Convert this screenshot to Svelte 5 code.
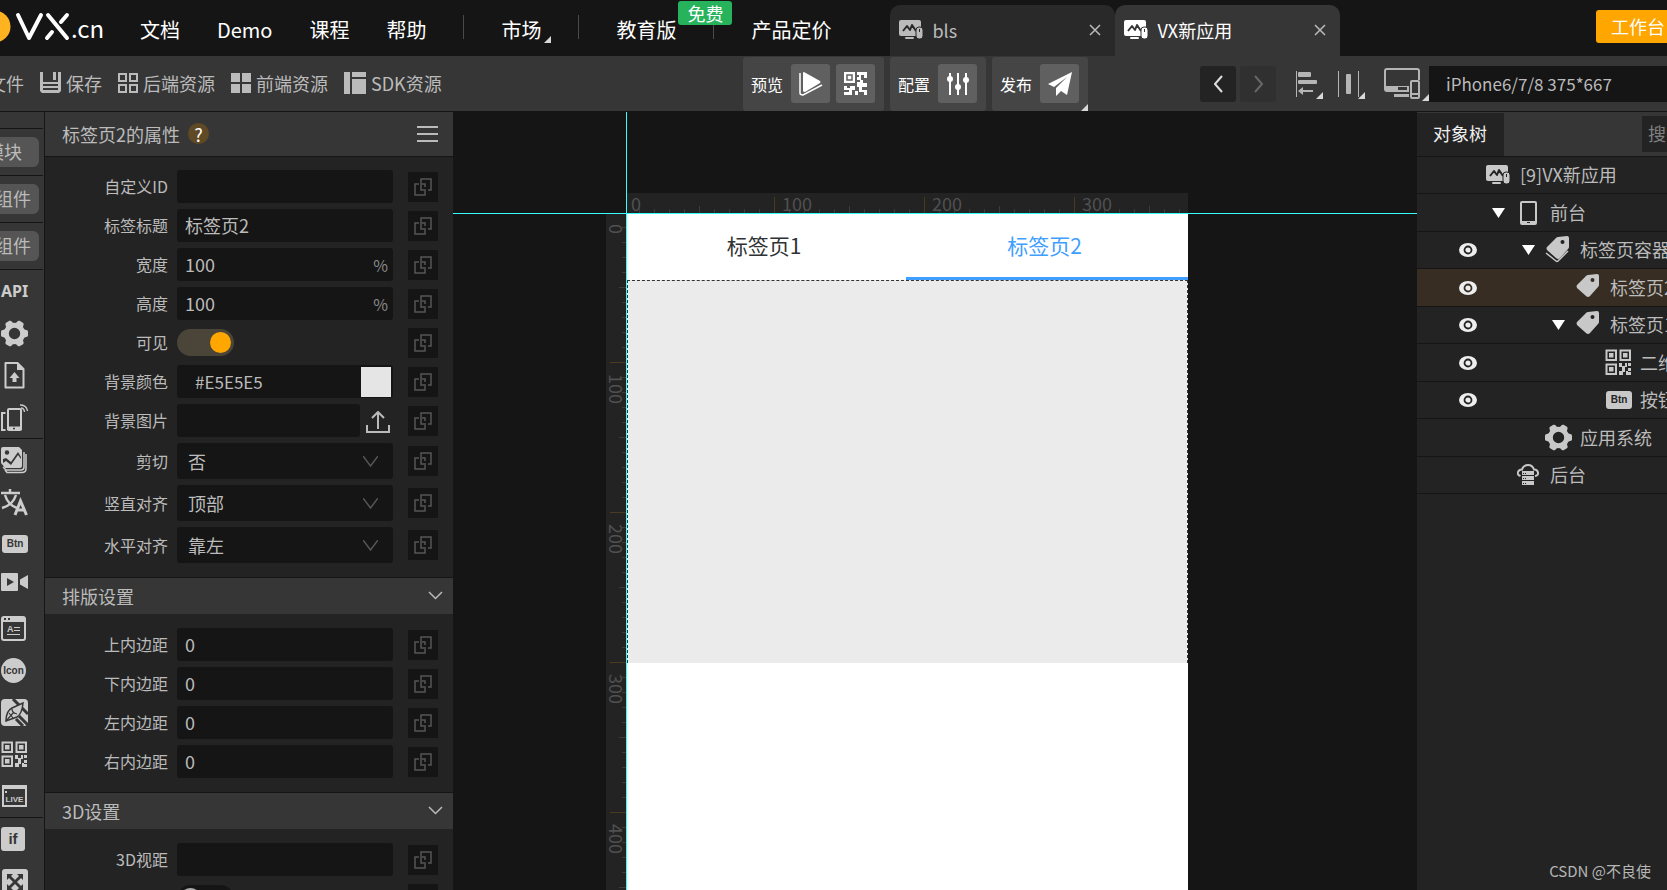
<script lang="ts">
  const fileTabs = [
    { title: "bls", active: false },
    { title: "VX新应用", active: true }
  ];

  const resources = [
    { icon: "save", label: "保存" },
    { icon: "gridOutline", label: "后端资源" },
    { icon: "gridSolid", label: "前端资源" },
    { icon: "sdk", label: "SDK资源" }
  ];

  const toolGroups = [
    ["api", "gear", "file", "phones"],
    ["pictures", "translate", "btn", "video", "article", "iconTool", "pen", "qr", "live"],
    ["if", "expand"]
  ];

  const sections = [
    {
      title: "",
      rows: [
        { id: "custom-id", label: "自定义ID", type: "text", value: "" },
        { id: "tab-title", label: "标签标题", type: "text", value: "标签页2" },
        { id: "width", label: "宽度", type: "text", value: "100", unit: "%" },
        { id: "height", label: "高度", type: "text", value: "100", unit: "%" },
        { id: "visible", label: "可见", type: "toggle", checked: true },
        { id: "bg-color", label: "背景颜色", type: "color", value: "#E5E5E5" },
        { id: "bg-image", label: "背景图片", type: "upload", value: "" },
        { id: "clip", label: "剪切", type: "select", value: "否" },
        { id: "v-align", label: "竖直对齐", type: "select", value: "顶部" },
        { id: "h-align", label: "水平对齐", type: "select", value: "靠左" }
      ]
    },
    {
      title: "排版设置",
      rows: [
        { id: "pad-top", label: "上内边距", type: "text", value: "0" },
        { id: "pad-bottom", label: "下内边距", type: "text", value: "0" },
        { id: "pad-left", label: "左内边距", type: "text", value: "0" },
        { id: "pad-right", label: "右内边距", type: "text", value: "0" }
      ]
    },
    {
      title: "3D设置",
      rows: [
        { id: "perspective", label: "3D视距", type: "text", value: "" },
        { id: "enable-3d", label: "", type: "toggle", checked: false }
      ]
    }
  ];

  const tree = [
    { label: "[9]VX新应用", icon: "app", level: 0 },
    { label: "前台", icon: "tablet", level: 1, open: true },
    { label: "标签页容器", icon: "tags", level: 2, open: true, eye: true },
    { label: "标签页2", icon: "tag", level: 3, eye: true, selected: true },
    { label: "标签页1", icon: "tag", level: 3, open: true, eye: true },
    { label: "二维码", icon: "qr", level: 4, eye: true },
    { label: "按钮", icon: "btn", level: 4, eye: true },
    { label: "应用系统", icon: "gear", level: 2 },
    { label: "后台", icon: "cloud", level: 1 }
  ];

  // one ruler tick every 10 units, 15px apart at 150% zoom
  const ticks = Array.from({ length: 48 }, (_, i) => i + 1);
  const tickSize = (n: number) => (n % 10 === 0 ? 16 : n % 5 === 0 ? 7 : 4);
  const tickColor = (n: number) => (n % 10 === 0 ? "#4a3a20" : "#3c3c3c");
  const hMarks = [0, 100, 200, 300];
  const vMarks = [0, 100, 200, 300, 400];

  let activePage = $state(2);
</script>

{#snippet icon(name)}
  {#if name === "save"}
    <svg width="21" height="21" viewBox="0 0 21 21" fill="currentColor">
      <path d="M0 0h3v10h15V0h3v19l-2 2H2l-2-2z" />
      <path d="M13 0h3v8h-3z" />
      <path d="M3 12h15v2H3zM3 16h15v2H3z" fill="var(--hole)" />
    </svg>
  {:else if name === "gridOutline"}
    <svg width="20" height="20" viewBox="0 0 20 20" fill="none" stroke="currentColor" stroke-width="2">
      <path d="M1 1h7v7H1zM12 1h7v7h-7zM1 12h7v7H1zM12 12h7v7h-7z" />
    </svg>
  {:else if name === "gridSolid"}
    <svg width="20" height="20" viewBox="0 0 20 20" fill="currentColor">
      <path d="M0 0h9v9H0zM11 0h9v9h-9zM0 11h9v9H0zM11 11h9v9h-9z" />
    </svg>
  {:else if name === "sdk"}
    <svg width="22" height="22" viewBox="0 0 22 22" fill="currentColor">
      <path d="M0 0h6v22H0zM8 0h14v5H8zM8 7h14v15H8z" />
    </svg>
  {:else if name === "app"}
    <svg width="24" height="20" viewBox="0 0 24 20" fill="currentColor">
      <rect width="22" height="16" rx="2" />
      <path d="M4 11l4-5 3 4 2-5 4 6" fill="none" stroke="var(--hole)" stroke-width="2" stroke-linejoin="round" />
      <rect x="17" y="7" width="7" height="12" rx="3" stroke="var(--hole)" stroke-width="1" />
      <path d="M20 9h1v3h-1z" fill="var(--hole)" />
      <rect x="6" y="17" width="9" height="2" rx="1" />
    </svg>
  {:else if name === "gear"}
    <svg width="27" height="27" viewBox="0 0 27 27" fill="currentColor">
      <circle cx="13.500" cy="13.500" r="8.200" fill="none" stroke="currentColor" stroke-width="5" />
      {#each [0, 60, 120, 180, 240, 300] as angle}
        <path d="M22 9l4 1.200q1 .4 1 1.400v3.800q0 1-1 1.400L22 18z" transform="rotate({angle} 13.500 13.500)" />
      {/each}
    </svg>
  {:else if name === "file"}
    <svg width="27" height="27" viewBox="0 0 27 27" fill="none" stroke="currentColor" stroke-width="2">
      <path d="M4.500 1h12l6 6v18.500h-18z" stroke-linejoin="round" />
      <path d="M16 1v7h7z" fill="currentColor" stroke="none" />
      <path d="M13.500 10l5 6h-3v4h-4v-4h-3z" fill="currentColor" stroke="none" />
    </svg>
  {:else if name === "phones"}
    <svg width="27" height="27" viewBox="0 0 27 27" fill="none" stroke="currentColor" stroke-width="2">
      <rect x="7" y="5" width="13" height="21" rx="1" />
      <path d="M6 22.500h15V26H6z" fill="currentColor" stroke="none" />
      <circle cx="13" cy="24.500" r="1" fill="var(--hole)" stroke="none" />
      <path d="M4.500 9H1v17h3.500" />
      <path d="M20 4q3 0 3.500 4M19 1q6.500 0 7.500 6" stroke-width="1.300" />
    </svg>
  {:else if name === "pictures"}
    <svg width="27" height="27" viewBox="0 0 27 27" fill="currentColor">
      <path d="M2 0h16l3 3v16q0 2-2 2H4l-4-5V2q0-2 2-2z" />
      <circle cx="6" cy="5.500" r="2.200" fill="var(--hole)" />
      <path d="M2 12l3-1 5 4 7-10 3 5v2l-3-4-7 10-5-4-3 2z" fill="var(--hole)" />
      <path d="M2 20l3 3h15q3 0 3-3V5M4 23l2 2.500h15q4 0 4-4V7" fill="none" stroke="currentColor" stroke-width="1.500" />
    </svg>
  {:else if name === "translate"}
    <svg width="27" height="27" viewBox="0 0 27 27" fill="none" stroke="currentColor" stroke-width="2.500">
      <path d="M0 4h19M9 0v4M4 6q3 10 12 13M15 6Q12 16 1 19" />
      <path d="M14 26l5.500-14L25.500 26M16 21h8" stroke-width="3" />
    </svg>
  {:else if name === "btn"}
    <svg width="27" height="20" viewBox="0 0 27 20">
      <rect x="1" y="1" width="26" height="18" rx="3" fill="currentColor" />
      <text x="14" y="13" text-anchor="middle" class="glyph" font-size="10">Btn</text>
    </svg>
  {:else if name === "video"}
    <svg width="27" height="27" viewBox="0 0 27 27" fill="currentColor">
      <rect width="17" height="18" rx="1" />
      <path d="M19 6.500L27 2v14l-8-4.500z" />
      <path d="M6 5l7 4-7 4z" fill="var(--hole)" />
    </svg>
  {:else if name === "article"}
    <svg width="27" height="27" viewBox="0 0 27 27" fill="currentColor">
      <rect x="1" y="2" width="23" height="23" rx="2" fill="none" stroke="currentColor" stroke-width="2" />
      <path d="M1 2h23v5H1z" />
      <path d="M3 3h2v2H3zM7 3h2v2H7z" fill="var(--hole)" />
      <text x="6" y="17" font-size="9" class="glyph light">A</text>
      <path d="M13 12h6v1h-6zM13 15h6v1h-6zM6 19h13v1H6z" />
    </svg>
  {:else if name === "iconTool"}
    <svg width="27" height="27" viewBox="0 0 27 27">
      <circle cx="12.500" cy="13.500" r="12.500" fill="currentColor" />
      <text x="12.500" y="17" text-anchor="middle" font-size="10" class="glyph">Icon</text>
    </svg>
  {:else if name === "pen"}
    <svg width="27" height="27" viewBox="0 0 27 27">
      <rect width="27" height="27" rx="4" fill="currentColor" />
      <path d="M12 0l15 15M18 17l9 9M15 20l7 7" stroke="var(--hole)" stroke-width="3" />
      <path d="M5 22q0-10 6-13l11-5q-1 11-6 14z" fill="currentColor" stroke="var(--hole)" stroke-width="1.500" />
      <path d="M5 22l8-9M11 10q0 4 5 5M8 14l4 5" fill="none" stroke="var(--hole)" stroke-width="1.200" />
    </svg>
  {:else if name === "qr"}
    <svg width="27" height="27" viewBox="0 0 27 27" fill="currentColor">
      <path d="M1.500 1.500h9.500v9.500H1.500zM15.500 1.500h9.500v9.500h-9.500zM1.500 15.500h9.500v9.500H1.500z" fill="none" stroke="currentColor" stroke-width="2" />
      <path d="M4 4h4.500v4.500H4zM18 4h4.500v4.500H18zM4 18h4.500v4.500H4z" />
      <path d="M14 14h3v3h3v-3h2v4h-2v2h-3v-2h-3zM23 14h3v3h-3zM23 19h3v3h-3v1h3v3h-5v-4h2zM14 22h3v-2h3v3h-2v3h-4z" />
    </svg>
  {:else if name === "live"}
    <svg width="27" height="27" viewBox="0 0 27 27">
      <rect x="2" y="3" width="23" height="20" fill="none" stroke="currentColor" stroke-width="2" />
      <path d="M1 2h25v4H1z" fill="currentColor" />
      <path d="M4 8h2v2H4z" fill="currentColor" />
      <text x="13.500" y="19" text-anchor="middle" font-size="8" class="glyph light">LIVE</text>
    </svg>
  {:else if name === "if"}
    <svg width="27" height="27" viewBox="0 0 27 27">
      <rect y="1" width="24" height="24" rx="3" fill="currentColor" />
      <text x="12" y="18" text-anchor="middle" font-size="15" class="glyph">if</text>
    </svg>
  {:else if name === "expand"}
    <svg width="27" height="27" viewBox="0 0 27 27">
      <rect x="1" y="1" width="26" height="26" rx="3" fill="currentColor" />
      <path d="M6 6h6l-2 2 4 4 4-4-2-2h6v6l-2-2-4 4 4 4 2-2v6h-6l2-2-4-4-4 4 2 2H6v-6l2 2 4-4-4-4-2 2z" fill="var(--hole)" />
    </svg>
  {:else if name === "tablet"}
    <svg width="17" height="24" viewBox="0 0 17 24">
      <rect x="1" y="1" width="15" height="22" rx="1" fill="none" stroke="currentColor" stroke-width="2" />
      <path d="M1 20h15v3H1z" fill="currentColor" />
      <path d="M7 21h3v1H7z" fill="var(--hole)" />
    </svg>
  {:else if name === "tag" || name === "tags"}
    <svg width="26" height="28" viewBox="0 0 26 28" fill="currentColor">
      <path d="M13 1l9-1q2 0 2 2v9q0 1-1 2l-8 9q-2 2-4 0l-9-8q-1-2 0-3l9-9q1-1 2-1z" />
      <circle cx="17.500" cy="6" r="2" fill="var(--hole)" />
      {#if name === "tags"}
        <path d="M1 17l10 8q1 1 2 0l10-10" fill="none" stroke="currentColor" stroke-width="1.500" />
      {/if}
    </svg>
  {:else if name === "cloud"}
    <svg width="22" height="22" viewBox="0 0 22 22" fill="currentColor">
      <path d="M3.500 12Q0 11 1 8q1-2.500 4-2.500Q6.500 1 11 1t6 4.500q3.500 0 4 3 .5 3-3 3.500" fill="none" stroke="currentColor" stroke-width="2" />
      <path d="M5 7h12v4H5zM5 12h12v4H5zM5 17h12v4H5z" />
      <path d="M6 9h1v1H6zM8 9h1v1H8zM6 14h1v1H6zM8 14h1v1H8zM6 19h1v1H6zM8 19h1v1H8z" fill="var(--hole)" />
    </svg>
  {/if}
{/snippet}

{#snippet corner()}
  <svg class="corner" width="7" height="7" viewBox="0 0 7 7"><path d="M7 0v7H0z" fill="#d8d8d8" /></svg>
{/snippet}

<div class="app">
  <header>
    <a class="logo" href="#home" aria-label="VX.cn">
      <svg width="71" height="56" viewBox="0 0 71 56">
        <circle cx="-5.500" cy="26.500" r="16" fill="#ffb320" />
        <path d="M18 15l11 23 12-23M48 15l19 23M67 15l-6 7M52 32l-5 6" fill="none" stroke="#fff" stroke-width="4" stroke-linecap="round" stroke-linejoin="round" />
      </svg>
      <span>.cn</span>
    </a>
    <nav>
      <a href="#docs">文档</a>
      <a href="#demo">Demo</a>
      <a href="#course">课程</a>
      <a href="#help">帮助</a>
      <i class="sep"></i>
      <a class="market" href="#market">市场{@render corner()}</a>
      <i class="sep"></i>
      <a class="edu" href="#edu">教育版<b>免费</b></a>
      <i class="sep"></i>
      <a href="#price">产品定价</a>
    </nav>
    <div class="file-tabs">
      {#each fileTabs as tab}
        <div class="file-tab" class:active={tab.active}>
          {@render icon("app")}
          <span>{tab.title}</span>
          <button aria-label="关闭">
            <svg width="12" height="12" viewBox="0 0 12 12"><path d="M1 1l10 10M11 1L1 11" stroke="#bbb" stroke-width="1.500" /></svg>
          </button>
        </div>
      {/each}
    </div>
    <button class="workbench">工作台</button>
  </header>

  <div class="toolbar">
    <div class="resources">
      <button>文件</button>
      {#each resources as item}
        <button>{@render icon(item.icon)}{item.label}</button>
      {/each}
    </div>
    <div class="actions">
      <div class="action">
        <span>预览</span>
        <button aria-label="预览">
          <svg width="24" height="24" viewBox="0 0 24 24" fill="#fff">
            <path d="M4 1q0-1 1-1l16 9q1 1 0 2L6 20q-2 0-2-1z" />
            <path d="M1 1v20q0 2 3 2l19-10" fill="none" stroke="#fff" stroke-width="1.500" />
          </svg>
        </button>
        <button aria-label="二维码">
          <svg width="23" height="23" viewBox="0 0 23 23" fill="#fff">
            <path d="M0 0h11v11H0z" />
            <path d="M3 3h5v5H3z" fill="none" stroke="#606060" stroke-width="1.500" />
            <path d="M13 0h10v6h-3V3h-3v5h-4V5h2V3h-2zM13 10h3V8h3v3h4v4h-5v3h5v5h-3v-3h-5v-5h-2zM0 14h3v2h3v-2h5v4H8v5H0v-3h5v-2H0zM11 19h3v4h-3z" />
          </svg>
        </button>
      </div>
      <div class="action">
        <span>配置</span>
        <button aria-label="配置">
          <svg width="22" height="22" viewBox="0 0 22 22" fill="#fff">
            <path d="M2 0h2v22H2zM10 0h2v22h-2zM18 0h2v22h-2z" />
            <circle cx="3" cy="6" r="3" /><circle cx="11" cy="14" r="3" /><circle cx="19" cy="7" r="3" />
          </svg>
        </button>
      </div>
      <div class="action">
        <span>发布</span>
        <button aria-label="发布">
          <svg width="24" height="24" viewBox="0 0 24 24" fill="#fff">
            <path d="M24 0L0 12l6 3L19 5 8 16v8l5-5 6 4z" />
          </svg>
        </button>
        {@render corner()}
      </div>
    </div>
    <div class="history">
      <button aria-label="后退">
        <svg width="9" height="18" viewBox="0 0 9 18"><path d="M8 1L1 9l7 8" fill="none" stroke="#ddd" stroke-width="2" /></svg>
      </button>
      <button class="off" aria-label="前进">
        <svg width="9" height="18" viewBox="0 0 9 18"><path d="M1 1l7 8-7 8" fill="none" stroke="#666" stroke-width="2" /></svg>
      </button>
    </div>
    <button class="tool" aria-label="对齐">
      <svg width="22" height="26" viewBox="0 0 22 26" fill="#b5b5b5">
        <path d="M0 0h1v26H0z" />
        <rect x="2" y="1" width="13" height="5" rx="1" /><rect x="2" y="9" width="19" height="4" rx="1" />
        <path d="M2 20l5-4v3h10v2H7v3z" />
      </svg>
      {@render corner()}
    </button>
    <button class="tool" aria-label="分布">
      <svg width="22" height="26" viewBox="0 0 22 26" fill="#b5b5b5">
        <path d="M0 0h1v26H0zM20 0h1v26h-1z" /><rect x="8" y="3" width="5" height="20" rx="1" />
      </svg>
      {@render corner()}
    </button>
    <button class="tool device" aria-label="设备">
      <svg width="36" height="31" viewBox="0 0 36 31" fill="none" stroke="#b5b5b5" stroke-width="2">
        <path d="M25 23H3q-2 0-2-2V3q0-2 2-2h30q2 0 2 2v9" />
        <path d="M1 18h24v5H3q-2 0-2-2zM10 26h15v3H10z" fill="#b5b5b5" stroke="none" />
        <path d="M15 20h7v1h-7z" stroke="#363636" />
        <rect x="27" y="13" width="8" height="17" rx="1" />
        <path d="M27 26h8" />
      </svg>
      {@render corner()}
    </button>
    <select class="device-select" aria-label="设备尺寸"><option>iPhone6/7/8 375*667</option></select>
  </div>

  <main>
    <aside class="tools">
      <div class="tools-top"></div>
      <div class="pill-row"><button class="module">模块</button></div>
      <div class="pill-row"><button>组件</button></div>
      <div class="pill-row"><button>组件</button></div>
      {#each toolGroups as group}
        <div class="tool-group">
          {#each group as name}
            <button aria-label={name}>
              {#if name === "api"}<b>API</b>{:else}{@render icon(name)}{/if}
            </button>
          {/each}
        </div>
      {/each}
    </aside>

    <section class="props">
      <div class="props-head">
        <span>标签页2的属性</span>
        <button class="help" aria-label="帮助">?</button>
        <button class="menu" aria-label="菜单">
          <svg width="21" height="16" viewBox="0 0 21 16"><path d="M0 1h21M0 8h21M0 15h21" stroke="#bbb" stroke-width="2" /></svg>
        </button>
      </div>
      {#each sections as section}
        {#if section.title}
          <button class="section-head">
            {section.title}
            <svg width="15" height="9" viewBox="0 0 15 9"><path d="M1 1l6.500 6.500L14 1" fill="none" stroke="#bbb" stroke-width="1.500" /></svg>
          </button>
        {/if}
        <div class="rows">
          {#each section.rows as row}
            <div class="row">
              <label for={row.id}>{row.label}</label>
              {#if row.type === "toggle"}
                <div class="slot"><input type="checkbox" class="toggle" id={row.id} checked={row.checked} /></div>
              {:else if row.type === "select"}
                <div class="slot field">
                  <select id={row.id}><option>{row.value}</option></select>
                  <svg class="chevron" width="15" height="11" viewBox="0 0 15 11"><path d="M0 0l7.500 10L15 0" fill="none" stroke="#555" stroke-width="1.500" /></svg>
                </div>
              {:else if row.type === "upload"}
                <div class="slot upload">
                  <input type="text" id={row.id} value={row.value} />
                  <button aria-label="上传">
                    <svg width="24" height="22" viewBox="0 0 24 22"><path d="M1 14v7h22v-7M12 18V1M6 7l6-6 6 6" fill="none" stroke="#bbb" stroke-width="2" /></svg>
                  </button>
                </div>
              {:else}
                <div class="slot field" class:color={row.type === "color"}>
                  <input type="text" id={row.id} value={row.value} />
                  {#if row.unit}<span class="unit">{row.unit}</span>{/if}
                  {#if row.type === "color"}
                    <button class="swatch" aria-label="选择颜色" style:background={row.value}></button>
                  {/if}
                </div>
              {/if}
              <button class="link" aria-label="绑定">
                <svg width="18" height="18" viewBox="0 0 18 18" fill="none" stroke="#555" stroke-width="1.500">
                  <path d="M11 11v6H1V6h4M8 6h3v3M7 7V1h10v11h-3M7 7v5h3" />
                </svg>
              </button>
            </div>
          {/each}
        </div>
      {/each}
    </section>

    <section class="canvas">
      <i class="guide-x"></i>
      <i class="guide-y"></i>
      <svg class="ruler-h" width="561" height="20" viewBox="0 0 561 20">
        {#each ticks as n}
          <rect x={15 * n - 3} y={20 - tickSize(n)} width="1" height={tickSize(n)} fill={tickColor(n)} />
        {/each}
        {#each hMarks as mark}
          <text x={mark * 3 / 2 + (mark ? 5 : 4)} y="18">{mark}</text>
        {/each}
      </svg>
      <svg class="ruler-v" width="20" height="720" viewBox="0 0 20 720">
        {#each ticks as n}
          <rect x={20 - tickSize(n)} y={15 * n - 2} width={tickSize(n)} height="1" fill={tickColor(n)} />
        {/each}
        {#each vMarks as mark}
          <text transform="translate(3 {mark * 3 / 2 + 10}) rotate(90)">{mark}</text>
        {/each}
      </svg>
      <div class="page">
        <div class="page-tabs">
          {#each [1, 2] as n}
            <button class:active={activePage === n} onclick={() => (activePage = n)}>标签页{n}</button>
          {/each}
        </div>
        <div class="page-body"></div>
      </div>
    </section>

    <aside class="tree">
      <div class="tree-head">
        <span>对象树</span>
        <input type="text" placeholder="搜索" aria-label="搜索" />
      </div>
      {#each tree as node}
        <div class="node" class:selected={node.selected}>
          <div class="indent" style:width="{36 + node.level * 30}px">
            {#if node.eye}
              <svg width="18" height="14" viewBox="0 0 18 14">
                <ellipse cx="9" cy="7" rx="9" ry="7" fill="#eee" />
                <circle cx="9" cy="7" r="3.500" fill="#eee" stroke="var(--hole)" stroke-width="1.800" />
              </svg>
            {/if}
          </div>
          <!-- the root has no caret column of its own -->
          {#if node.level > 0}
            <div class="cell">
              {#if node.open}
                <svg width="13" height="10" viewBox="0 0 13 10"><path d="M0 0h13L6.500 10z" fill="#fff" /></svg>
              {/if}
            </div>
          {/if}
          <div class="cell" class:root={node.level === 0}>{@render icon(node.icon)}</div>
          <span>{node.label}</span>
        </div>
      {/each}
      <div class="credit">CSDN @不良使</div>
    </aside>
  </main>
</div>

<style>
  :global(body) {
    background: #151515;
  }

  .app {
    --hole: #363636;
    height: 100vh;
    display: flex;
    flex-direction: column;
    overflow: hidden;
    background: #151515;
    color: #bbb;
    font-family: "Noto Sans CJK SC", "Noto Sans", sans-serif;
    font-size: 18px;
    line-height: 24px;
  }

  button,
  input,
  select {
    box-sizing: border-box;
    margin: 0;
    padding: 0;
    border: 0;
    background: none;
    color: inherit;
    font: inherit;
    outline: none;
    appearance: none;
  }

  button {
    flex: none;
    white-space: nowrap;
    cursor: pointer;
  }

  svg {
    display: block;
    flex: none;
  }

  a {
    color: #fff;
    text-decoration: none;
  }

  .glyph {
    font-family: "Liberation Sans", sans-serif;
    font-weight: 700;
    fill: var(--hole);
  }

  .glyph.light {
    fill: currentColor;
  }

  .corner {
    position: absolute;
    right: 0;
    bottom: 0;
  }

  /* top bar */
  header {
    flex: none;
    display: flex;
    height: 56px;
    white-space: nowrap;
  }

  .logo {
    flex: none;
    display: flex;
    width: 140px;
    font-size: 24px;
    line-height: 56px;
  }

  nav {
    display: flex;
    align-items: center;
    gap: 37px;
    padding-top: 3px;
    font-size: 20px;
  }

  .sep {
    width: 1px;
    height: 24px;
    margin-bottom: 6px;
    background: #4a4a4a;
  }

  .market,
  .edu {
    position: relative;
  }

  .market .corner {
    right: -10px;
    bottom: -1px;
  }

  .edu b {
    position: absolute;
    left: 62px;
    bottom: 17px;
    z-index: 1;
    padding: 0 9px;
    border-radius: 3px;
    background: #27b35c;
    font-size: 18px;
    font-weight: 400;
  }

  .file-tabs {
    display: flex;
    align-items: flex-end;
    margin-left: 59px;
  }

  .file-tab {
    --hole: #292929;
    box-sizing: border-box;
    display: flex;
    align-items: center;
    gap: 9px;
    width: 225px;
    height: 51px;
    padding: 0 14px 2px 9px;
    border-radius: 10px 10px 0 0;
    background: #292929;
  }

  .file-tab.active {
    --hole: #363636;
    background: #363636;
    color: #fff;
  }

  .file-tab span {
    flex: 1;
  }

  .workbench {
    height: 33px;
    margin: 10px -13px 0 auto;
    padding: 0 15px 2px;
    border-radius: 3px;
    background: #ffa600;
    color: #fff;
  }

  /* toolbar */
  .toolbar {
    flex: none;
    display: flex;
    align-items: center;
    height: 55px;
    border-bottom: 1px solid #151515;
    background: #363636;
  }

  .resources {
    box-sizing: border-box;
    flex: none;
    display: flex;
    gap: 16px;
    width: 755px;
    margin-left: -12px;
    padding-bottom: 2px;
  }

  .resources button {
    display: flex;
    align-items: center;
    gap: 5px;
  }

  .actions {
    flex: none;
    display: flex;
    gap: 6px;
  }

  .action {
    position: relative;
    display: flex;
    align-items: center;
    gap: 6px;
    height: 54px;
    padding: 0 9px 0 8px;
    border-radius: 3px;
    background: #454545;
    color: #fff;
    font-size: 16px;
  }

  .action span {
    margin-right: 2px;
  }

  .action button {
    display: grid;
    place-items: center;
    width: 39px;
    height: 39px;
    border-radius: 3px;
    background: #606060;
  }

  .history {
    flex: none;
    display: flex;
    gap: 4px;
    margin-left: 112px;
  }

  .history button {
    display: grid;
    place-items: center;
    width: 36px;
    height: 36px;
    border-radius: 3px;
    background: #232323;
  }

  .history .off {
    background: #303030;
  }

  .tool {
    position: relative;
    width: 27px;
    height: 31px;
    margin-left: 20px;
  }

  .tool + .tool {
    margin-left: 15px;
  }

  .tool.device {
    width: 45px;
    height: 35px;
    margin-left: 19px;
  }

  .device-select {
    flex: 1;
    min-width: 0;
    height: 36px;
    padding-left: 17px;
    background: #151515;
    font-size: 17px;
  }

  main {
    flex: 1;
    display: flex;
    min-height: 0;
  }

  /* component strip */
  .tools {
    flex: none;
    box-sizing: border-box;
    width: 45px;
    overflow: hidden;
    border-right: 1px solid #151515;
    background: #363636;
    color: #ccc;
  }

  .tools-top,
  .pill-row,
  .tool-group {
    margin-right: 1px;
    border-bottom: 1px solid #151515;
  }

  .tools-top {
    height: 16px;
  }

  .pill-row {
    padding: 8px 4px 8px 0;
    height: 30px;
  }

  .pill-row button {
    width: 100%;
    height: 30px;
    padding: 0 8px 2px 0;
    border-radius: 0 6px 6px 0;
    background: #555;
    display: flex;
    align-items: center;
    justify-content: flex-end;
    color: #bbb;
  }

  .pill-row .module {
    padding-right: 17px;
  }

  .tool-group button {
    display: flex;
    align-items: center;
    width: 100%;
    height: 42px;
    padding-left: 1px;
  }

  .tool-group b {
    font-family: "Noto Sans", sans-serif;
    font-size: 16px;
  }

  /* property panel */
  .props {
    flex: none;
    width: 408px;
    overflow: hidden;
    background: #232323;
  }

  .props-head {
    box-sizing: border-box;
    display: flex;
    align-items: center;
    height: 45px;
    padding: 0 15px 1px 17px;
    border-bottom: 1px solid #151515;
    background: #363636;
  }

  .help {
    width: 21px;
    height: 21px;
    margin-left: 8px;
    border-radius: 50%;
    background: #5f4a25;
    color: #fff;
    line-height: 20px;
  }

  .menu {
    margin-left: auto;
  }

  .section-head {
    display: flex;
    align-items: center;
    justify-content: space-between;
    width: 100%;
    height: 37px;
    padding: 0 10px 1px 17px;
    border-top: 1px solid #151515;
    background: #363636;
  }

  .rows {
    display: grid;
    grid-template-columns: minmax(0, 1fr);
    gap: 6px;
    padding: 13px 15px 14px 0;
  }

  .section-head + .rows {
    padding-top: 14px;
  }

  .row {
    display: flex;
    align-items: center;
  }

  .row label {
    width: 123px;
    margin-right: 9px;
    padding-bottom: 1px;
    text-align: right;
    font-size: 16px;
  }

  .slot {
    flex: 1;
    display: flex;
    align-items: center;
    min-width: 0;
    height: 33px;
    margin-right: 15px;
    border-radius: 3px;
  }

  .field,
  .upload input {
    background: #151515;
  }

  .slot input[type="text"] {
    flex: 1;
    min-width: 0;
    height: 33px;
    padding: 0 8px 1px;
    border-radius: 3px;
  }

  .slot.color input[type="text"] {
    padding-left: 18px;
    font-size: 17px;
  }

  .unit {
    margin-right: 5px;
    color: #888;
    font-size: 16px;
  }

  .swatch {
    width: 30px;
    height: 30px;
    margin-right: 2px;
  }

  .upload button {
    margin: 2px 3px 0 6px;
  }

  .slot select {
    flex: 1;
    height: 36px;
    padding-left: 11px;
  }

  .slot:has(select) {
    height: 36px;
  }

  .chevron {
    margin-right: 15px;
  }

  .toggle {
    width: 57px;
    height: 27px;
    padding: 3px;
    border-radius: 14px;
    background: #151515;
  }

  .toggle::before {
    content: "";
    display: block;
    width: 21px;
    height: 21px;
    border-radius: 50%;
    background: #aaa;
  }

  .toggle:checked {
    background: #4b4439;
  }

  .toggle:checked::before {
    margin-left: auto;
    background: #ffa600;
  }

  .link {
    display: grid;
    place-items: center;
    width: 30px;
    height: 30px;
    background: #151515;
  }

  /* canvas */
  .canvas {
    flex: 1;
    position: relative;
    display: grid;
    grid-template-columns: 20px 561px;
    grid-template-rows: 20px 1fr;
    gap: 1px;
    min-width: 0;
    padding: 81px 0 0 153px;
    overflow: hidden;
  }

  .ruler-h {
    grid-column: 2;
    background: #232323;
  }

  .ruler-v {
    background: #232323;
  }

  .canvas text {
    fill: #505050;
    font-size: 18px;
  }

  .guide-x,
  .guide-y {
    position: absolute;
    z-index: 1;
    background: #3ff;
  }

  .guide-x {
    top: 101px;
    left: 0;
    right: 0;
    height: 1px;
  }

  .guide-y {
    top: 0;
    bottom: 0;
    left: 173px;
    width: 1px;
  }

  .page {
    background: #fff;
  }

  .page-tabs {
    display: grid;
    grid-template-columns: 279px 1fr;
    height: 66px;
  }

  .page-tabs button {
    padding: 0 5px 2px 0;
    border-bottom: 3px solid transparent;
    color: #303133;
    font-size: 21px;
  }

  .page-tabs .active {
    border-color: #409eff;
    color: #409eff;
  }

  .page-body {
    height: 382px;
    border: 1px dashed #333;
    border-bottom: 0;
    background: #ebebeb;
  }

  /* object tree */
  .tree {
    --hole: #232323;
    flex: none;
    position: relative;
    width: 250px;
    overflow: hidden;
    background: #232323;
    color: #c8c8c8;
    white-space: nowrap;
  }

  .tree-head {
    display: flex;
    align-items: center;
    justify-content: space-between;
    height: 44px;
    border-bottom: 1px solid #151515;
    background: #363636;
  }

  .tree-head span {
    padding: 0 17px 2px 16px;
    background: #232323;
    color: #eee;
    line-height: 41px;
  }

  .tree-head input {
    width: 25px;
    height: 36px;
    padding: 0 0 2px 6px;
    background: #232323;
  }

  .tree-head input::placeholder {
    color: #808080;
  }

  .node {
    box-sizing: border-box;
    display: flex;
    align-items: center;
    height: 37px;
    border-bottom: 1px solid #151515;
  }

  .node:nth-child(odd) {
    height: 38px;
  }

  .node.selected {
    --hole: #372d22;
    background: #372d22;
  }

  .indent {
    flex: none;
    box-sizing: border-box;
  }

  .indent svg {
    margin-left: 42px;
  }

  .cell {
    flex: none;
    display: grid;
    place-items: center;
    width: 30px;
  }

  .cell.root {
    margin-left: 30px;
  }

  .node span {
    margin-left: 7px;
    padding-bottom: 2px;
    color: #bbb;
  }

  .credit {
    position: absolute;
    right: 16px;
    bottom: 7px;
    color: #b5b5b5;
    font-size: 15px;
  }
</style>
